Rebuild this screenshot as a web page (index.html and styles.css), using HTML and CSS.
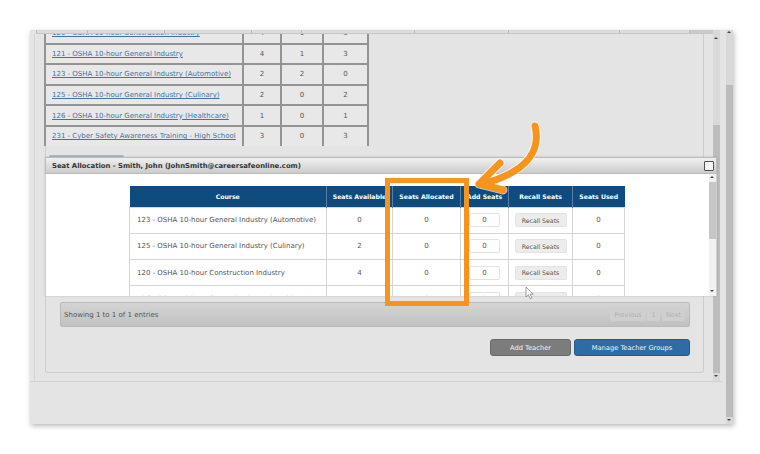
FILE: index.html
```html
<!DOCTYPE html>
<html>
<head>
<meta charset="utf-8">
<link rel="stylesheet" href="styles.css">
</head>
<body>
<div class="frame">
  <div class="page">
    <div class="iframe">
      <div class="doc">
        <div class="box">
          <div class="panel">
            <div class="top-wrap">
              <table class="courses">
                <tr><td class="name"><a>120 - OSHA 10-hour Construction Industry</a></td><td>4</td><td>1</td><td>3</td></tr>
                <tr><td class="name"><a>121 - OSHA 10-hour General Industry</a></td><td>4</td><td>1</td><td>3</td></tr>
                <tr><td class="name"><a>123 - OSHA 10-hour General Industry (Automotive)</a></td><td>2</td><td>2</td><td>0</td></tr>
                <tr><td class="name"><a>125 - OSHA 10-hour General Industry (Culinary)</a></td><td>2</td><td>0</td><td>2</td></tr>
                <tr><td class="name"><a>126 - OSHA 10-hour General Industry (Healthcare)</a></td><td>1</td><td>0</td><td>1</td></tr>
                <tr><td class="name"><a>231 - Cyber Safety Awareness Training - High School</a></td><td>3</td><td>0</td><td>3</td></tr>
              </table>
            </div>
            <div class="tabs"><span class="tab"></span></div>
            <div class="teacher-area"></div>
            <div class="info-bar">
              <span>Showing 1 to 1 of 1 entries</span>
              <span class="pager"><span class="pg pg-prev">Previous</span><span class="pg pg-num">1</span><span class="pg pg-next">Next</span></span>
            </div>
            <div class="actions">
              <span class="btn btn-gray">Add Teacher</span>
              <span class="btn btn-blue">Manage Teacher Groups</span>
            </div>
          </div>
        </div>
        <div class="strip">
          <span class="cell c1"></span><span class="cell c2"></span><span class="cell c3"></span><span class="cell c4"></span><span class="cell c5"></span><span class="cell c6"></span><span class="cell c7"></span><span class="cell c8"></span><span class="cell c9"></span>
        </div>
      </div>
      <div class="sb sb-inner"><span class="arr arr-up"></span><span class="thumb"></span><span class="arr arr-down"></span></div>

      <div class="dialog">
        <div class="dlg-head">
          <span>Seat Allocation - Smith, John (JohnSmith@careersafeonline.com)</span>
          <span class="dlg-close"></span>
        </div>
        <div class="dlg-body">
          <div class="dlg-content">
            <table class="alloc">
              <tr><th class="w1">Course</th><th class="w2">Seats Available</th><th class="w3">Seats Allocated</th><th class="w4">Add Seats</th><th class="w5">Recall Seats</th><th class="w6">Seats Used</th></tr>
              <tr><td class="course">123 - OSHA 10-hour General Industry (Automotive)</td><td>0</td><td>0</td><td><span class="inp">0</span></td><td><span class="recall">Recall Seats</span></td><td>0</td></tr>
              <tr><td class="course">125 - OSHA 10-hour General Industry (Culinary)</td><td>2</td><td>0</td><td><span class="inp">0</span></td><td><span class="recall">Recall Seats</span></td><td>0</td></tr>
              <tr><td class="course">120 - OSHA 10-hour Construction Industry</td><td>4</td><td>0</td><td><span class="inp">0</span></td><td><span class="recall">Recall Seats</span></td><td>0</td></tr>
              <tr><td class="course">126 - OSHA 10-hour General Industry (Healthcare)</td><td>1</td><td>0</td><td><span class="inp">0</span></td><td><span class="recall">Recall Seats</span></td><td>0</td></tr>
            </table>
          </div>
          <div class="sb sb-dlg"><span class="arr arr-up"></span><span class="thumb"></span><span class="arr arr-down"></span></div>
        </div>
      </div>
    </div>
  </div>
  <div class="sb sb-outer"><span class="arr arr-up"></span><span class="thumb"></span><span class="arr arr-down"></span></div>
</div>

<svg class="annot" width="760" height="454" viewBox="0 0 760 454">
  <rect x="387.5" y="180.5" width="79" height="123" fill="none" stroke="#f7941d" stroke-width="5"/>
  <path d="M535,126 C541,150 528,172 482,184" fill="none" stroke="#ffffff" stroke-opacity="0.7" stroke-width="9" stroke-linecap="round"/>
  <path d="M500,163 L479,184 L503,190" fill="none" stroke="#ffffff" stroke-opacity="0.7" stroke-width="9" stroke-linecap="round" stroke-linejoin="round"/>
  <path d="M535,126 C541,150 528,172 482,184" fill="none" stroke="#f7941d" stroke-width="7" stroke-linecap="round"/>
  <path d="M500,163 L479,184 L503,190" fill="none" stroke="#f7941d" stroke-width="7" stroke-linecap="round" stroke-linejoin="round"/>
  <path d="M526,287 L526,297 L528.4,294.8 L530.3,298.6 L531.9,297.9 L530.1,294.2 L533.2,294.2 Z" fill="#ffffff" stroke="#777" stroke-width="0.7"/>
</svg>
</body>
</html>
```

FILE: styles.css
```css
* { box-sizing: border-box; }

body {
  margin: 0;
  padding: 30px 0 0 30px;
  width: 760px;
  height: 454px;
  overflow: hidden;
  background: #ffffff;
  font-family: "DejaVu Sans", Verdana, sans-serif;
  position: relative;
}

.frame {
  width: 703px;
  height: 394px;
  display: flex;
  background: #e4e4e4;
  box-shadow: 1px 2px 5px rgba(0, 0, 0, 0.28);
}

.page {
  width: 694px;
  display: flex;
  flex-direction: column;
}

.iframe {
  position: relative;
  width: 692px;
  height: 352px;
  border-bottom: 1px solid #d3d3d3;
  display: flex;
}

.doc {
  position: relative;
  width: 683px;
  height: 351px;
  overflow: hidden;
}

/* fixed header strip of the scrolled page, lying over the content */
.strip {
  position: absolute;
  left: 0;
  top: 0;
  right: 0;
  display: flex;
  height: 4px;
  padding-left: 6px;
  background: #e4e4e4;
}
.cell {
  height: 4px;
  background: #dcdcdc;
  border-right: 1px solid #bcbcbc;
  border-bottom: 1px solid #c6c6c6;
}
.c1 { width: 52px; border-left: 1px solid #bcbcbc; }
.c2 { width: 77px; }
.c3 { width: 87px; }
.c4 { width: 50px; }
.c5 { width: 113px; }
.c6 { width: 94px; }
.c7 { width: 111px; }
.c8 { width: 70px; }
.c9 { width: 23px; background: #c9c9c9; border-right: none; }

.box {
  margin-left: 4px;
  height: 351px;
  border-left: 1px solid #d6d6d6;
  padding: 0 9px 8px 10px;
}

.panel {
  height: 100%;
  border: 1px solid #cdcdcd;
  border-top: none;
  border-radius: 0 0 3px 3px;
  display: flex;
  flex-direction: column;
}

.top-wrap {
  height: 116px;
  overflow: hidden;
  margin-left: -2px;
}

.courses {
  border-collapse: collapse;
  margin-top: -8px;
  background: #e8e8e8;
  font-size: 7px;
  color: #555;
}
.courses td {
  border: 2px solid #939393;
  height: 20.6px;
  padding: 0;
  text-align: center;
  width: 38px;
}
.courses td:nth-child(3) { width: 42px; }
.courses td:nth-child(4) { width: 45px; }
.courses td.name {
  width: 198px;
  text-align: left;
  padding-left: 6px;
}
.courses a {
  color: #4571a6;
  text-decoration: underline;
}

.tabs {
  margin-top: 9px;
  height: 2px;
  padding-left: 3px;
  display: flex;
}
.tab {
  width: 75px;
  height: 2px;
  background: #a9b8c9;
  border-radius: 2px 2px 0 0;
}

.teacher-area {
  height: 145px;
}

.info-bar {
  margin: 0 13px 0 14px;
  height: 25px;
  border: 1px solid #bababa;
  border-radius: 2px;
  background: linear-gradient(#d4d4d4, #c1c1c1);
  display: flex;
  align-items: center;
  justify-content: space-between;
  padding: 0 4px 0 3px;
  font-size: 7px;
  color: #555;
}

.pager {
  display: flex;
  gap: 1px;
}
.pg {
  height: 13px;
  display: flex;
  align-items: center;
  justify-content: center;
  background: #cfcfcf;
  color: #b0b0b0;
  font-size: 6.5px;
  border-radius: 1px;
}
.pg-prev { width: 36px; }
.pg-num { width: 13px; margin-right: 1px; }
.pg-next { width: 23px; }

.actions {
  margin-top: 12px;
  display: flex;
  justify-content: flex-end;
  gap: 3px;
  padding-right: 13px;
}
.btn {
  height: 17px;
  border-radius: 3px;
  display: flex;
  align-items: center;
  justify-content: center;
  color: #f4f4f4;
  font-size: 6.7px;
}
.btn-gray {
  width: 81px;
  background: #7c7c7c;
  border: 1px solid #6a6a6a;
}
.btn-blue {
  width: 116px;
  background: #2e6ca6;
  border: 1px solid #235b8f;
}

/* scrollbars */
.sb {
  position: relative;
  display: flex;
  flex-direction: column;
}
.arr {
  position: absolute;
  left: 1px;
  width: 0;
  height: 0;
  border-left: 2.5px solid transparent;
  border-right: 2.5px solid transparent;
}
.arr-up { border-bottom: 2.5px solid #444; }
.arr-down { border-top: 2.5px solid #444; }

.sb-inner {
  width: 7px;
  height: 351px;
  background: #d9d9d9;
}
.sb-inner .arr-up { top: 7px; }
.sb-inner .arr-down { top: 345px; }
.sb-inner .thumb {
  margin-top: 95px;
  height: 248px;
  background: #bdbdbd;
}

.sb-outer {
  width: 7px;
  margin-left: 2px;
  background: #d8d8d8;
}
.sb-outer .arr-up { top: 1px; }
.sb-outer .arr-down { top: 389px; }
.sb-outer .thumb {
  margin-top: 55px;
  height: 332px;
  background: #bbbbbb;
}

/* dialog */
.dialog {
  position: absolute;
  left: 15px;
  top: 127px;
  width: 672px;
  height: 139px;
  display: flex;
  flex-direction: column;
  box-shadow: 0 0 2px rgba(0, 0, 0, 0.18);
}

.dlg-head {
  height: 17px;
  border: 1px solid #bcbcbc;
  background: linear-gradient(#f0f0f0, #cbcbcb);
  display: flex;
  align-items: center;
  justify-content: space-between;
  padding: 0 2px 0 6px;
  font-size: 6.85px;
  font-weight: bold;
  color: #333;
}
.dlg-close {
  width: 10px;
  height: 10px;
  border: 1.5px solid #505050;
  background: #f6f6f6;
  border-radius: 1px;
}

.dlg-body {
  height: 122px;
  display: flex;
  background: #ffffff;
  border-left: 1px solid #cfcfcf;
  border-right: 1px solid #cfcfcf;
}
.dlg-content {
  flex: 1;
  overflow: hidden;
  padding: 12px 0 0 83px;
}
.sb-dlg {
  width: 7px;
  background: #f1f1f1;
}
.sb-dlg .arr-up { top: 2px; }
.sb-dlg .arr-down { top: 116px; }
.sb-dlg .thumb {
  margin-top: 8px;
  height: 57px;
  background: #c6c6c6;
}

.alloc {
  border-collapse: collapse;
  font-size: 7px;
  color: #555;
}
.alloc th {
  height: 21px;
  padding: 0;
  background: #0e4b7e;
  color: #ffffff;
  font-size: 6.2px;
  font-weight: bold;
  border-right: 1px solid #5a80a6;
  white-space: nowrap;
  overflow: hidden;
}
.alloc th:last-child { border-right: none; }
.w1 { width: 197px; }
.w2 { width: 66px; }
.w3 { width: 68px; }
.w4 { width: 48px; }
.w5 { width: 64px; }
.w6 { width: 52px; }

.alloc td {
  height: 26.3px;
  padding: 0;
  text-align: center;
  border: 1px solid #d5d5d5;
}
.alloc td.course {
  text-align: left;
  padding-left: 7px;
}

.inp {
  display: inline-flex;
  width: 31px;
  height: 14px;
  align-items: center;
  justify-content: center;
  border: 1px solid #e2e2e2;
  border-radius: 2px;
  vertical-align: middle;
}
.recall {
  display: inline-flex;
  width: 52px;
  height: 14px;
  align-items: center;
  justify-content: center;
  background: #ececec;
  border: 1px solid #e3e3e3;
  border-radius: 2px;
  font-size: 6.2px;
  vertical-align: middle;
}

.annot {
  position: absolute;
  left: 0;
  top: 0;
  pointer-events: none;
}
```
